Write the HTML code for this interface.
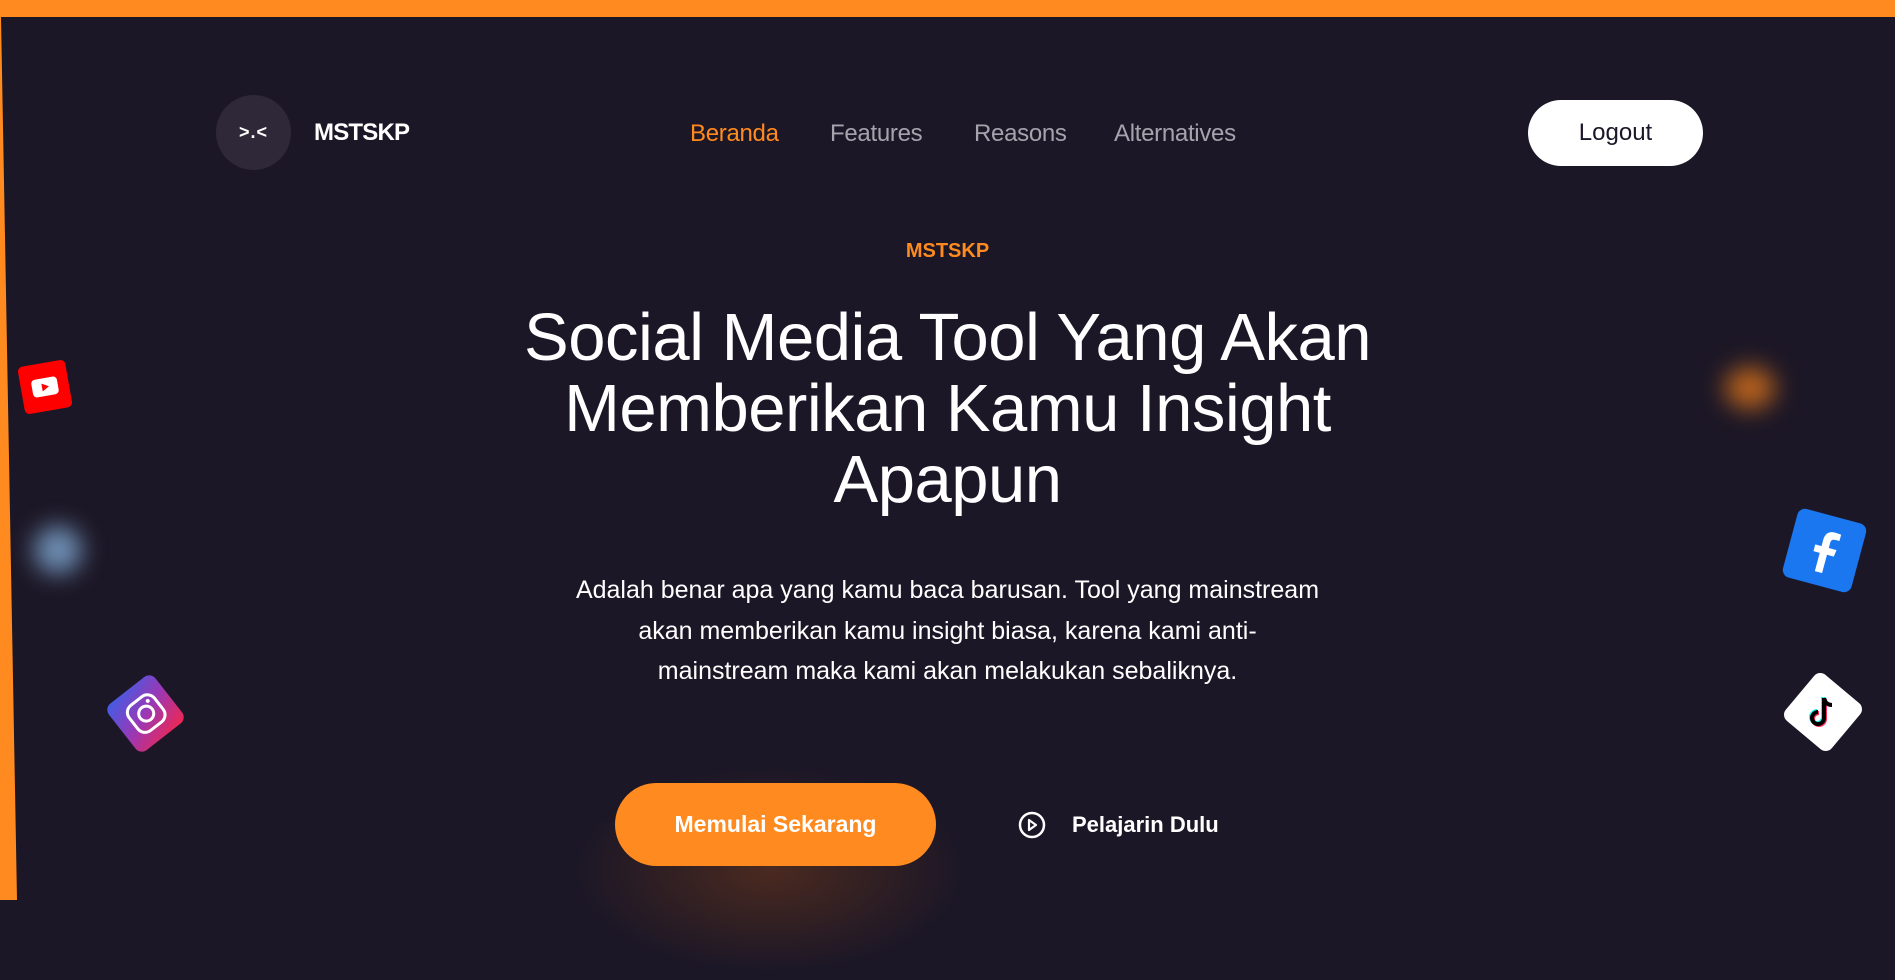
<!DOCTYPE html>
<html><head><meta charset="utf-8"><style>
*{margin:0;padding:0;box-sizing:border-box}
html,body{width:1895px;height:900px;overflow:hidden;background:#1c1726;font-family:"Liberation Sans",sans-serif}
.topbar{position:absolute;left:0;top:0;width:1895px;height:17px;background:#ff8a1f}
.abs{position:absolute}
.nav a{position:absolute;top:120px;font-size:24px;color:#a6a3ad;text-decoration:none;letter-spacing:-0.3px}
.glow{position:absolute;border-radius:50%}
.ico{position:absolute;display:flex;align-items:center;justify-content:center}
</style></head><body>
<div class="topbar"></div>
<svg class="abs" style="left:0;top:0" width="30" height="900"><polygon points="0,17 1,17 17,900 0,900" fill="#ff8a1f"/></svg>

<div class="glow" style="left:1725px;top:367px;width:50px;height:42px;background:#b8621d;filter:blur(12px)"></div>
<div class="glow" style="left:34px;top:526px;width:48px;height:48px;background:#6f8fb5;filter:blur(12px)"></div>
<div class="glow" style="left:560px;top:760px;width:420px;height:220px;background:radial-gradient(ellipse at center,rgba(120,60,25,0.5),rgba(28,23,38,0) 65%)"></div>

<div class="abs" style="left:216px;top:95px;width:75px;height:75px;border-radius:50%;background:#2e2838;color:#fff;font-size:18px;font-weight:bold;display:flex;align-items:center;justify-content:center;letter-spacing:1px">&gt;.&lt;</div>
<div class="abs" style="left:314px;top:119px;font-size:24px;font-weight:bold;color:#fff;letter-spacing:-0.8px">MSTSKP</div>

<div class="nav">
<a style="left:690px;color:#ff8a1f">Beranda</a>
<a style="left:830px">Features</a>
<a style="left:974px">Reasons</a>
<a style="left:1114px">Alternatives</a>
</div>
<div class="abs" style="left:1528px;top:100px;width:175px;height:66px;border-radius:33px;background:#fff;color:#1b1628;font-size:24px;display:flex;align-items:center;justify-content:center">Logout</div>

<div class="abs" style="left:0;width:1895px;top:240px;text-align:center;color:#ff8a1f;font-size:20px;font-weight:bold">MSTSKP</div>
<div class="abs" style="left:0;width:1895px;top:302px;text-align:center;color:#fff;font-size:67px;line-height:71px;letter-spacing:-0.5px">Social Media Tool Yang Akan<br>Memberikan Kamu Insight<br>Apapun</div>
<div class="abs" style="left:0;width:1895px;top:570px;text-align:center;color:#fff;font-size:25px;line-height:40.5px;white-space:nowrap">Adalah benar apa yang kamu baca barusan. Tool yang mainstream<br>akan memberikan kamu insight biasa, karena kami anti-<br>mainstream maka kami akan melakukan sebaliknya.</div>

<div class="abs" style="left:615px;top:783px;width:321px;height:83px;border-radius:42px;background:#ff8a1f;color:#fff;font-size:23px;font-weight:bold;display:flex;align-items:center;justify-content:center">Memulai Sekarang</div>
<svg class="abs" style="left:1018px;top:811px" width="28" height="28" viewBox="0 0 28 28"><circle cx="14" cy="14" r="12" fill="none" stroke="#fff" stroke-width="2.5"/><path d="M11 9 L18 14 L11 19 Z" fill="none" stroke="#fff" stroke-width="2.2" stroke-linejoin="round"/></svg>
<div class="abs" style="left:1072px;top:812px;color:#fff;font-size:22px;font-weight:bold">Pelajarin Dulu</div>

<div class="ico" style="left:21px;top:363px;width:48px;height:48px;border-radius:5px;background:#ff0000;transform:rotate(-10deg)">
<svg width="28" height="20" viewBox="0 0 28 20"><rect x="1" y="1" width="26" height="18" rx="4" fill="#fff"/><path d="M11 6 L18 10 L11 14Z" fill="#f00"/></svg></div>
<div class="ico" style="left:116px;top:684px;width:59px;height:59px;border-radius:8px;background:linear-gradient(160deg,#3f5ee6,#9a38b5 50%,#f2264f);transform:rotate(-38deg)">
<svg width="40" height="40" viewBox="0 0 40 40"><rect x="4" y="4" width="32" height="32" rx="9" fill="none" stroke="#fff" stroke-width="3"/><circle cx="20" cy="20" r="7.5" fill="none" stroke="#fff" stroke-width="3"/><circle cx="29" cy="11" r="2" fill="#fff"/></svg></div>
<div class="ico" style="left:1789px;top:515px;width:71px;height:71px;border-radius:8px;background:#1b77f0;transform:rotate(15deg)">
<svg width="34" height="44" viewBox="0 0 34 44"><path d="M20 44 V25 H27 L28 18 H20 V13 C20 10 21 8.5 24.5 8.5 H28.5 V2 C27 1.7 24.5 1.5 22 1.5 C16 1.5 12.5 5 12.5 11.5 V18 H6 V25 H12.5 V44 Z" fill="#fff"/></svg></div>
<div class="ico" style="left:1793px;top:682px;width:60px;height:60px;border-radius:8px;background:#fff;transform:rotate(40deg)">
<svg width="34" height="36" viewBox="0 0 34 36" style="transform:rotate(-40deg)"><path d="M18 4 V24 A6 6 0 1 1 12 18" fill="none" stroke="#25f4ee" stroke-width="4" transform="translate(-1,-1)"/><path d="M18 4 V24 A6 6 0 1 1 12 18" fill="none" stroke="#fe2c55" stroke-width="4" transform="translate(1,1)"/><path d="M18 4 V24 A6 6 0 1 1 12 18 M18 4 C19 9 22 11 26 11" fill="none" stroke="#000" stroke-width="4"/></svg></div>
</body></html>
